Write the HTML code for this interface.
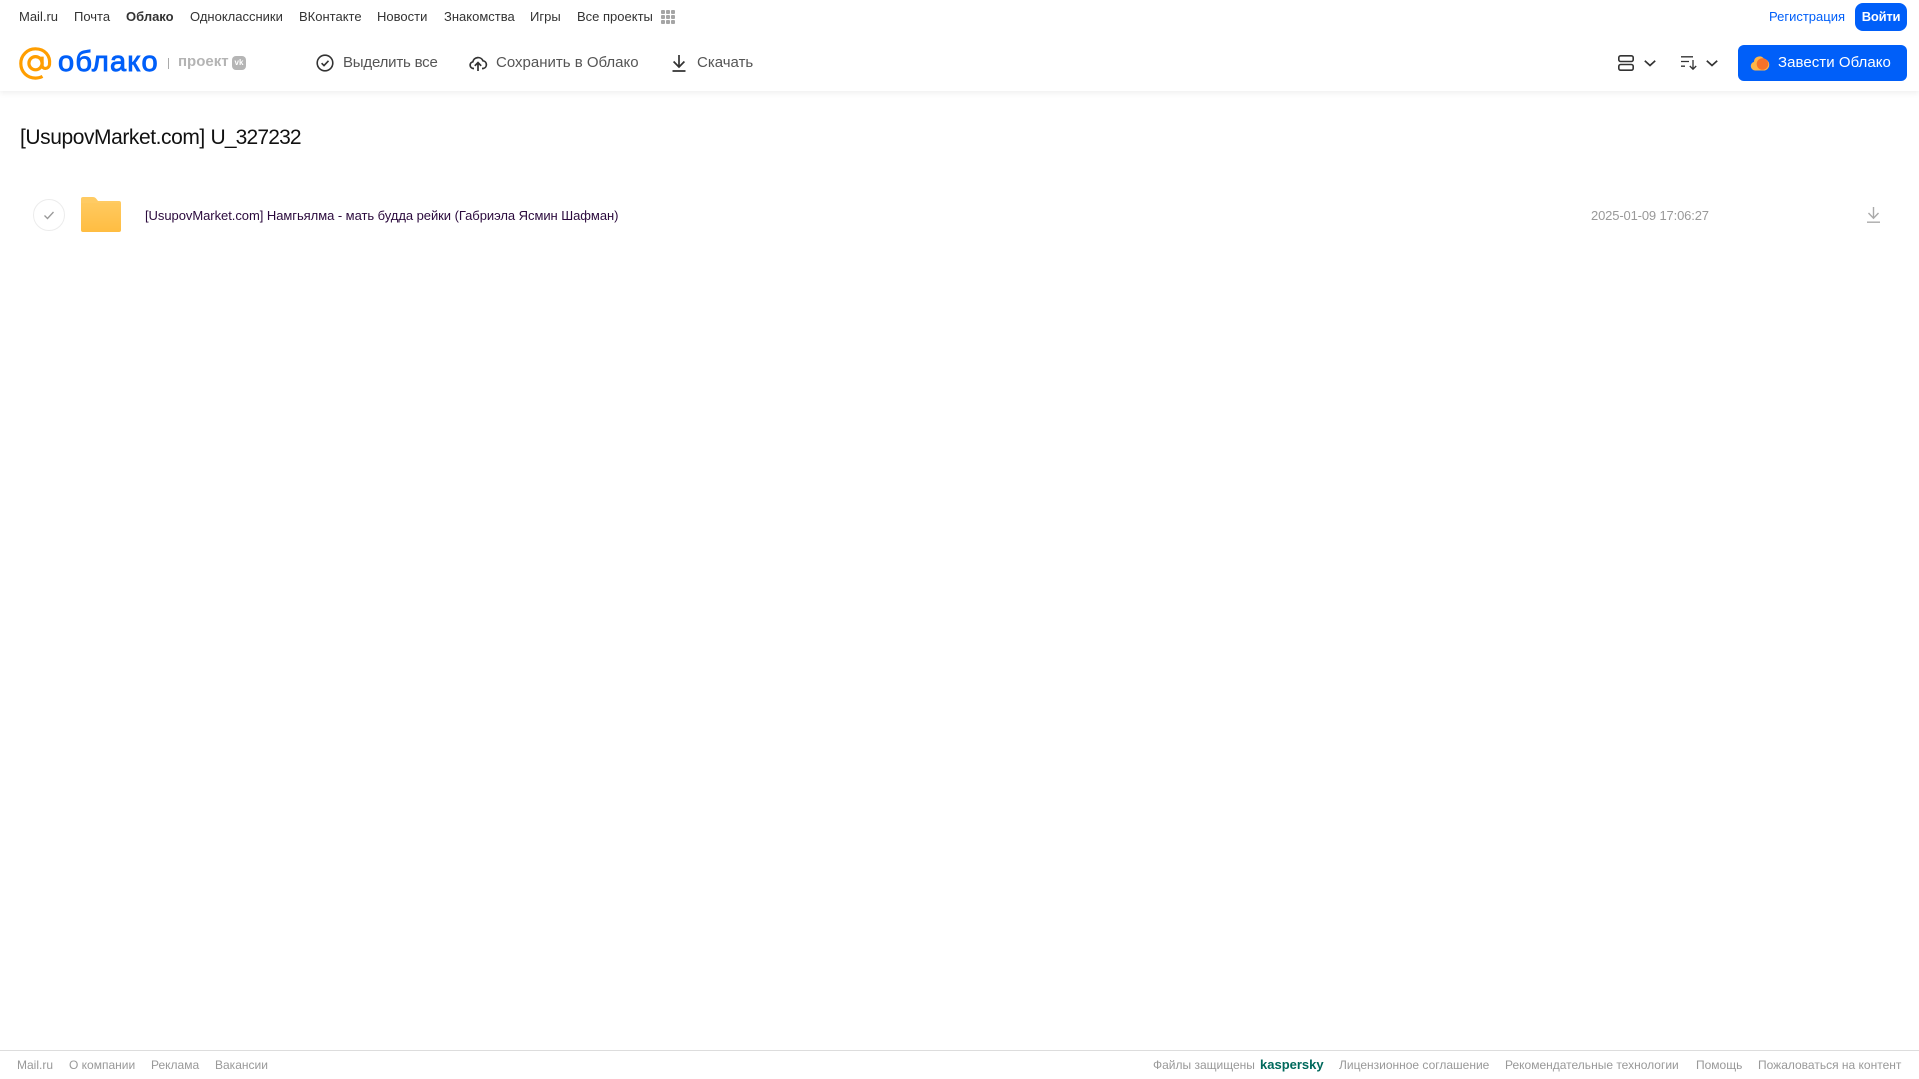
<!DOCTYPE html>
<html lang="ru"><head><meta charset="utf-8"><title>Облако</title>
<style>
html,body{margin:0;padding:0;background:#fff}
body{width:1919px;height:1079px;position:relative;overflow:hidden;font-family:"Liberation Sans",sans-serif}
a,span.t{position:absolute;white-space:nowrap;text-decoration:none;line-height:16px}
.n{top:9px;font-size:13px;color:#333}
.tb{top:55px;font-size:15px;color:#555}
.f{top:1057px;font-size:12px;color:#999}
svg{position:absolute;overflow:visible}
#hd{position:absolute;left:0;top:0;width:1919px;height:91px;background:#fff;box-shadow:0 2px 6px rgba(0,0,0,.07)}
</style></head><body>
<div id="hd"></div>
<a class="n" style="left:19px">Mail.ru</a>
<a class="n" style="left:74px">Почта</a>
<a class="n" style="left:126px;font-weight:bold">Облако</a>
<a class="n" style="left:190px">Одноклассники</a>
<a class="n" style="left:299px">ВКонтакте</a>
<a class="n" style="left:377px">Новости</a>
<a class="n" style="left:444px">Знакомства</a>
<a class="n" style="left:530px">Игры</a>
<a class="n" style="left:577px">Все проекты</a>
<svg style="left:661px;top:10px" width="14" height="14" fill="#a5a5a5"><rect width="4" height="4" rx="1"/><rect x="5" width="4" height="4" rx="1"/><rect x="10" width="4" height="4" rx="1"/><rect y="5" width="4" height="4" rx="1"/><rect x="5" y="5" width="4" height="4" rx="1"/><rect x="10" y="5" width="4" height="4" rx="1"/><rect y="10" width="4" height="4" rx="1"/><rect x="5" y="10" width="4" height="4" rx="1"/><rect x="10" y="10" width="4" height="4" rx="1"/></svg>
<a style="left:1769px;top:9px;font-size:13px;color:#005ff9">Регистрация</a>
<div style="position:absolute;left:1855px;top:3px;width:52px;height:28px;background:#005ff9;border-radius:8px"></div>
<a style="left:1855px;top:9px;width:52px;text-align:center;font-size:13px;font-weight:bold;color:#fff;letter-spacing:-.25px">Войти</a>

<svg style="left:19px;top:47px" width="33" height="33" viewBox="0 0 33 33" fill="none" stroke="#ff9e00" stroke-width="3.2"><circle cx="16.5" cy="16.2" r="6.6"/><path d="M23.1 9.6v8.6c0 4.4 6.6 4.400 7.400-.6C31.700 8.500 25.500 1.800 16.500 1.800A14.600 14.600 0 0 0 1.800 16.500c0 8.500 6.500 14.600 14.700 14.600 2.800 0 5-.6 7-1.700"/></svg>
<span class="t" style="left:58px;top:44px;line-height:36px;font-size:29px;color:#005ff9;-webkit-text-stroke:.9px #005ff9;letter-spacing:1.2px">облако</span>
<div style="position:absolute;left:168px;top:58px;width:1px;height:11px;background:#aaa"></div>
<span class="t" style="left:178px;top:54px;font-size:15px;font-weight:bold;color:#b4b4b4">проект</span>
<div style="position:absolute;left:232px;top:56px;width:14px;height:14px;background:#b5b5b5;border-radius:4px;color:#fff;font-size:8px;line-height:14px;text-align:center;font-weight:bold">vk</div>

<svg style="left:316px;top:54px" width="18" height="18" fill="none" stroke="#333" stroke-width="1.6"><circle cx="9" cy="9" r="7.800"/><path d="M5.600 9.200l2.400 2.400 4.500-4.800"/></svg>
<span class="t tb" style="left:343px;letter-spacing:-.2px">Выделить все</span>
<svg style="left:469px;top:54px" width="18" height="18" fill="none" stroke="#333" stroke-width="1.7"><path d="M5 14.500H4.200A3.400 3.400 0 0 1 3.800 7.800 5.400 5.400 0 0 1 14 6.800a3.900 3.900 0 0 1 .2 7.700H13"/><path d="M9 17V9M5.800 11.800L9 8.600l3.200 3.200"/></svg>
<span class="t tb" style="left:496px">Сохранить в Облако</span>
<svg style="left:672px;top:55px" width="14" height="17" fill="none" stroke="#333" stroke-width="1.700"><path d="M7 0v11.500M1.600 6.500L7 12l5.400-5.500M.5 16h13"/></svg>
<span class="t tb" style="left:697px">Скачать</span>

<svg style="left:1618px;top:55px" width="16" height="16" fill="none" stroke="#333" stroke-width="1.600"><rect x=".8" y=".8" width="14.400" height="5.700" rx="1.800"/><rect x=".8" y="9.500" width="14.400" height="5.700" rx="1.800"/></svg>
<svg style="left:1644px;top:60px" width="12" height="7" fill="none" stroke="#333" stroke-width="1.700"><path d="M.8.800L6 5.500 11.200.8"/></svg>
<svg style="left:1681px;top:56px" width="17" height="14" fill="none" stroke="#333" stroke-width="1.300"><path d="M0 .8h12M0 5.500h8M0 10.200h4M12 4v9M8.800 10l3.200 3.200 3.200-3.200"/></svg>
<svg style="left:1706px;top:60px" width="12" height="7" fill="none" stroke="#333" stroke-width="1.700"><path d="M.8.800L6 5.500 11.200.8"/></svg>
<div style="position:absolute;left:1738px;top:45px;width:169px;height:36px;background:#005ff9;border-radius:6px"></div>
<svg style="left:1750px;top:54px" width="20" height="17"><path d="M5 16.500a4.500 4.500 0 0 1-1-8.800A5.500 5.500 0 0 1 14 4.800 6 6 0 0 1 15 16.500z" fill="#ffb547"/><circle cx="12.500" cy="10" r="5.800" fill="#f5722a"/></svg>
<span class="t" style="left:1778px;top:55px;font-size:15px;color:#fff;letter-spacing:.05px">Завести Облако</span>

<span class="t" style="left:20px;top:126px;line-height:24px;font-size:21px;color:#111;letter-spacing:-.43px">[UsupovMarket.com]</span>
<span class="t" style="left:210.500px;top:126px;line-height:24px;font-size:21px;color:#111;letter-spacing:-.83px">U_327232</span>
<svg style="left:33px;top:199px" width="32" height="32" fill="none"><circle cx="16" cy="16" r="15.500" stroke="#ececec"/><path d="M11.500 16.500l3 3 6-6.500" stroke="#999" stroke-width="1.300"/></svg>
<svg style="left:81px;top:197px" width="40" height="35"><defs><linearGradient id="g" x1="0" y1="0" x2="0" y2="1"><stop offset="0" stop-color="#ffc95e"/><stop offset="1" stop-color="#ffbd42"/></linearGradient></defs><path d="M2 0h9.500c2 0 3 .8 4 2l1.500 2h21a2 2 0 0 1 2 2v4H0V2a2 2 0 0 1 2-2z" fill="#ffcb63"/><path d="M0 6h38a2 2 0 0 1 2 2v25a2 2 0 0 1-2 2H2a2 2 0 0 1-2-2z" fill="url(#g)"/></svg>
<a style="left:145px;top:208px;font-size:13px;color:#2b0a3d;letter-spacing:-.05px">[UsupovMarket.com] Намгьялма - мать будда рейки (Габриэла Ясмин Шафман)</a>
<span class="t" style="left:1591px;top:208px;font-size:13px;color:#999;letter-spacing:-.15px">2025-01-09 17:06:27</span>
<svg style="left:1867px;top:207px" width="13" height="16" fill="none" stroke="#aaa" stroke-width="1.400"><path d="M6.500 0v11M1.500 6l5 5.200 5-5.200M0 15.200h13"/></svg>

<div style="position:absolute;left:0;top:1050px;width:1919px;height:1px;background:#ddd"></div>
<a class="f" style="left:17px">Mail.ru</a>
<a class="f" style="left:69px">О компании</a>
<a class="f" style="left:151px">Реклама</a>
<a class="f" style="left:215px">Вакансии</a>
<a class="f" style="left:1153px">Файлы защищены</a>
<a class="f" style="left:1260px;top:1057px;font-size:13px;font-weight:bold;color:#00695c">kaspersky</a>
<a class="f" style="left:1339px">Лицензионное соглашение</a>
<a class="f" style="left:1505px">Рекомендательные технологии</a>
<a class="f" style="left:1696px">Помощь</a>
<a class="f" style="left:1758px">Пожаловаться на контент</a>
</body></html>
